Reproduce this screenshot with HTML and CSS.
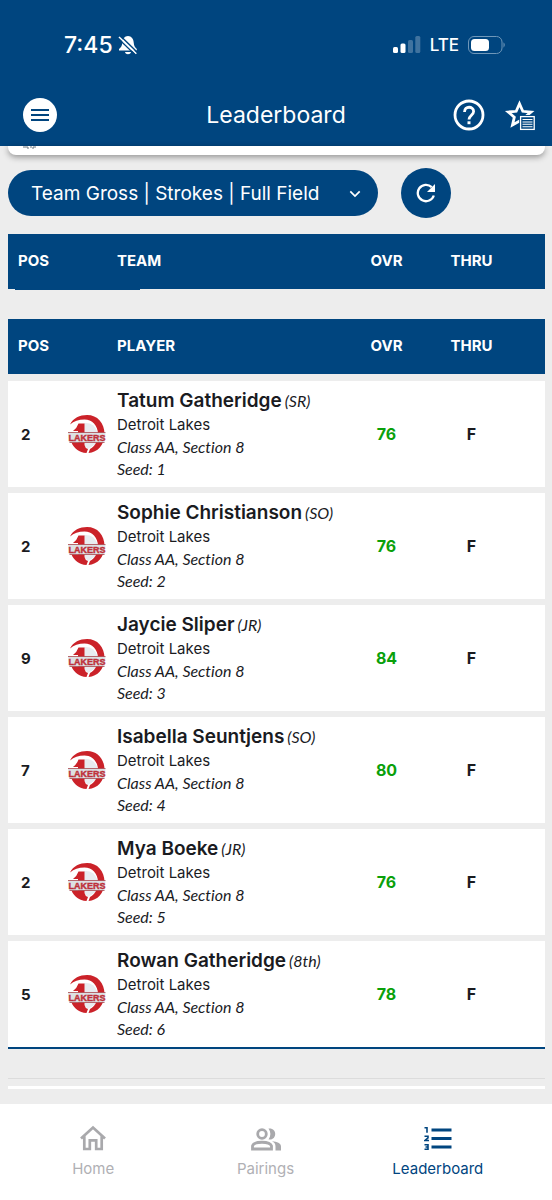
FILE: index.html
```
<!DOCTYPE html>
<html lang="en">
<head>
<meta charset="utf-8">
<meta name="viewport" content="width=device-width, initial-scale=1">
<title>Leaderboard</title>
<link rel="stylesheet" href="styles.css">
</head>
<body>
<svg class="defs" aria-hidden="true">
  <symbol id="lakers" viewBox="0 0 38 40">
    <path d="M16 9Q26 8 29.500 18V29L20 35L16 31Z" fill="#e8ecf0"/>
    <path d="M2 10.500C5 4 12 1 19 1C29.500 1 36.500 9 36.500 20C36.500 31 29.500 38.500 20.500 39L22 35C26.500 33 30 27 30 20C30 11.500 24 5.500 16.500 5.500C10.500 5.500 6 7 2 10.500Z" fill="#cb2229"/>
    <path d="M5 17Q9 14 10.500 9.500H16.500V31Q17 34 20 35L18.500 39C11 38.500 6 34.500 3.500 28.500H10V17Z" fill="#cb2229"/>
    <path d="M0 18.500H37.500L36.500 28.500H1.500Z" fill="#dde0e3"/>
    <path d="M0 18.500H37.500M1.500 28.500H36.500" stroke="#a8464d" stroke-width=".8"/>
  </symbol>
</svg>
<div class="screen">
  <header class="app-header">
    <div class="status">
      <div class="status-side">
        <span class="clock">7:45</span>
        <svg width="20" height="20" viewBox="0 0 20 20" aria-hidden="true">
          <path d="M10 1C6.500 1 4.500 4 4.300 7.500C4.100 11 3 12.300 1 14V15.500H18.800V14C17 12.300 15.900 11 15.700 7.500C15.500 4 13.500 1 10 1ZM7 17H13C12.500 20 7.500 20 7 17Z" fill="#fff"/>
          <path d="M2.800 1.300L20 18" stroke="#00457f" stroke-width="1.500"/>
          <path d="M1 2L18.300 18.800" stroke="#fff" stroke-width="1.600"/>
          <path d="M0 3.300L17.300 20" stroke="#00457f" stroke-width="1.200"/>
        </svg>
      </div>
      <div class="status-side">
        <svg width="28" height="18" viewBox="0 0 28 18" fill="#fff" aria-hidden="true">
          <rect x="0" y="11" width="5" height="6" rx="1.500"/><rect x="7.500" y="7.500" width="5" height="9.500" rx="1.500"/>
          <rect x="15" y="4" width="5" height="13" rx="1.500" opacity=".25"/><rect x="22.300" y="0" width="5" height="17" rx="1.500" opacity=".25"/>
        </svg>
        <span class="network">LTE</span>
        <svg width="38" height="18" viewBox="0 0 38 18" aria-hidden="true">
          <rect x=".5" y=".5" width="33.500" height="17" rx="5.500" fill="none" stroke="#6f97b9"/>
          <rect x="3" y="3" width="18" height="12" rx="3.500" fill="#fff"/><path d="M35.500 6.300Q38 9 35.500 11.700Z" fill="#6f97b9"/>
        </svg>
      </div>
    </div>
    <div class="toolbar">
      <button class="menu-button" aria-label="Menu">
        <svg width="18" height="12" viewBox="0 0 18 12"><path d="M0 1H18M0 6H18M0 11H18" stroke="#00457f" stroke-width="1.800"/></svg>
      </button>
      <h1 class="title">Leaderboard</h1>
      <div class="actions">
        <button class="icon-button" aria-label="Help">
          <svg width="32" height="32" viewBox="0 0 32 32" fill="none" stroke="#fff"><circle cx="16" cy="16" r="14" stroke-width="2.800"/><path d="M11.500 13C11.500 6.500 20.600 7 20.600 12.500C20.600 16 16 16.500 16 20.500" stroke-width="2.800"/><path d="M14.500 22.300H17.500V25.200H14.500Z" fill="#fff" stroke="none"/></svg>
        </button>
        <button class="icon-button" aria-label="Favorites list">
          <svg width="32" height="32" viewBox="0 0 32 32"><path d="M15.500 4.800L18.800 12.300L27 13L20.800 18.300L22.600 26L15.500 22L8.500 26L10.300 18.300L4.300 13L12.200 12.300Z" fill="none" stroke="#fff" stroke-width="2.800"/><rect x="15.200" y="16" width="16" height="15" fill="#00457f"/><rect x="16.600" y="17.600" width="13.600" height="12.800" fill="none" stroke="#fff" stroke-width="1.300"/><path d="M18.500 20.500H28.500M18.500 23H28.500M18.500 25.300H28.500M18.500 27.800H28.500" stroke="#fff" stroke-width="1.100"/></svg>
        </button>
      </div>
    </div>
  </header>

  <main class="content">
    <div class="event-card"><svg width="16" height="4" viewBox="0 0 16 4" aria-hidden="true"><path d="M1 1H6M8 1H10M11 1H14M5 2H7M10 2H12" stroke="#69757f" stroke-width="1"/></svg></div>
    <div class="filters">
      <div class="select-wrap">
        <select class="select" aria-label="Leaderboard view"><option>Team Gross | Strokes | Full Field</option></select>
        <svg class="chevron" width="12" height="8" viewBox="0 0 12 8" aria-hidden="true"><path d="M1.300 1.300L6 6L10.700 1.300" fill="none" stroke="#fff" stroke-width="1.700"/></svg>
      </div>
      <button class="refresh" aria-label="Refresh">
        <svg width="20" height="20" viewBox="0 0 20 20"><path d="M17.800 12.500A8.200 8.200 0 1 1 15.700 4.100" fill="none" stroke="#fff" stroke-width="2.300"/><path d="M19 1V9H11Z" fill="#fff"/></svg>
      </button>
    </div>

    <table class="board">
      <thead><tr><th class="pos" colspan="2">POS</th><th class="who">TEAM</th><th class="score">OVR</th><th class="thru">THRU</th></tr></thead>
    </table>
    <div class="marker"></div>

    <table class="board players">
      <thead><tr><th class="pos">POS</th><th class="logo"></th><th class="who">PLAYER</th><th class="score">OVR</th><th class="thru">THRU</th></tr></thead>
      <tbody>
        <tr><td class="pos">2</td><td class="logo"><svg class="crest" viewBox="0 0 38 40" role="img" aria-label="Lakers"><use href="#lakers"/><text x="19" y="27" class="crest-text">LAKERS</text></svg></td><td class="who"><div class="name">Tatum Gatheridge<em>(SR)</em></div><div>Detroit Lakes</div><em>Class AA, Section 8</em><em>Seed: 1</em></td><td class="score">76</td><td class="thru">F</td></tr>
        <tr><td class="pos">2</td><td class="logo"><svg class="crest" viewBox="0 0 38 40" role="img" aria-label="Lakers"><use href="#lakers"/><text x="19" y="27" class="crest-text">LAKERS</text></svg></td><td class="who"><div class="name">Sophie Christianson<em>(SO)</em></div><div>Detroit Lakes</div><em>Class AA, Section 8</em><em>Seed: 2</em></td><td class="score">76</td><td class="thru">F</td></tr>
        <tr><td class="pos">9</td><td class="logo"><svg class="crest" viewBox="0 0 38 40" role="img" aria-label="Lakers"><use href="#lakers"/><text x="19" y="27" class="crest-text">LAKERS</text></svg></td><td class="who"><div class="name">Jaycie Sliper<em>(JR)</em></div><div>Detroit Lakes</div><em>Class AA, Section 8</em><em>Seed: 3</em></td><td class="score">84</td><td class="thru">F</td></tr>
        <tr><td class="pos">7</td><td class="logo"><svg class="crest" viewBox="0 0 38 40" role="img" aria-label="Lakers"><use href="#lakers"/><text x="19" y="27" class="crest-text">LAKERS</text></svg></td><td class="who"><div class="name">Isabella Seuntjens<em>(SO)</em></div><div>Detroit Lakes</div><em>Class AA, Section 8</em><em>Seed: 4</em></td><td class="score">80</td><td class="thru">F</td></tr>
        <tr><td class="pos">2</td><td class="logo"><svg class="crest" viewBox="0 0 38 40" role="img" aria-label="Lakers"><use href="#lakers"/><text x="19" y="27" class="crest-text">LAKERS</text></svg></td><td class="who"><div class="name">Mya Boeke<em>(JR)</em></div><div>Detroit Lakes</div><em>Class AA, Section 8</em><em>Seed: 5</em></td><td class="score">76</td><td class="thru">F</td></tr>
        <tr><td class="pos">5</td><td class="logo"><svg class="crest" viewBox="0 0 38 40" role="img" aria-label="Lakers"><use href="#lakers"/><text x="19" y="27" class="crest-text">LAKERS</text></svg></td><td class="who"><div class="name">Rowan Gatheridge<em>(8th)</em></div><div>Detroit Lakes</div><em>Class AA, Section 8</em><em>Seed: 6</em></td><td class="score">78</td><td class="thru">F</td></tr>
      </tbody>
    </table>
    <div class="end-rule"></div>
    <div class="next-card"></div>
  </main>

  <nav class="tabs">
    <a class="tab" href="#home"><svg width="28" height="28" viewBox="0 0 28 28" fill="none" stroke="#a9a9ac" stroke-width="2.700"><path d="M2 14.500L14 3.500L26 14.500M5.300 12V25H10.800V16.300H17.200V25H22.700V12" /></svg><span>Home</span></a>
    <a class="tab" href="#pairings"><svg width="32" height="28" viewBox="0 0 32 28" fill="none" stroke="#a9a9ac" stroke-width="2.800"><circle cx="13" cy="10" r="4.300"/><path d="M3.500 25V22C5 17 21 17 22.500 22V25Z"/><path d="M19.500 4.500C28.500 3.500 28.500 16.500 19.500 15.500C22 12 22 8 19.500 4.500ZM23 17.300C28 17.800 32 19 32 22.500V26.400H26.500V22.500C26.500 20 25.500 18.500 23 17.300Z" fill="#a9a9ac" stroke="none"/></svg><span>Pairings</span></a>
    <a class="tab active" href="#leaderboard" aria-current="page"><svg width="28" height="28" viewBox="0 0 28 28" fill="none" stroke="#00457f"><path d="M7.500 6H27.500M7.500 14.500H27.500M7.500 23H27.500" stroke-width="2.800"/><path d="M.5 3.800H3V8.800M.5 12.200H4V13.800L1 16.500H5M.5 20.700H4V25.300H.5M1.500 23H4" stroke-width="1.600"/></svg><span>Leaderboard</span></a>
  </nav>
</div>
</body>
</html>
```
FILE: styles.css
```
* { box-sizing: border-box; }
body {
  margin: 0;
  background: #ededed;
  color: #1a1b1f;
  font-family: Inter, Roboto, sans-serif;
  font-size: 15px;
}
button { padding: 0; border: 0; background: none; display: grid; place-items: center; }
svg { display: block; flex: none; }
.defs { position: absolute; width: 0; height: 0; }
.screen { min-height: 100vh; display: flex; flex-direction: column; }

.app-header { background: #00457f; color: #fff; padding-bottom: 6px; }
.status {
  display: flex;
  justify-content: space-between;
  align-items: center;
  height: 90px;
  padding: 0 46px 0 64px;
}
.status-side { display: flex; align-items: center; gap: 9px; }
.status-side:first-child { gap: 5px; }
.clock { font-size: 23px; font-weight: 500; }
.network { font-size: 17px; font-weight: 500; }
.toolbar {
  display: grid;
  grid-template-columns: 1fr auto 1fr;
  align-items: center;
  height: 50px;
  padding: 0 16px;
}
.menu-button { width: 34px; height: 34px; margin-left: 7px; border-radius: 50%; background: #fff; }
.title { margin: 0; font-size: 23px; font-weight: 400; }
.actions { display: flex; justify-content: flex-end; gap: 19px; }

.content { flex: 1; padding: 0 7px 15px 8px; }
.event-card {
  height: 9px;
  padding-left: 14px;
  border-radius: 0 0 8px 8px;
  background: #fff;
  box-shadow: 0 2px 6px rgba(0, 0, 0, .4);
}
.filters { display: flex; align-items: center; gap: 23px; padding: 13px 0 16px; }
.select-wrap { position: relative; width: 370px; }
.select {
  width: 100%;
  height: 46px;
  padding: 0 48px 0 23px;
  border: 0;
  border-radius: 23px;
  appearance: none;
  background: #00457f;
  color: #fff;
  font: 400 19px Inter, Roboto, sans-serif;
}
.chevron { position: absolute; right: 17px; top: 20px; pointer-events: none; }
.refresh { width: 50px; height: 50px; border-radius: 50%; background: #00457f; }

.board { width: 100%; table-layout: fixed; border-collapse: separate; border-spacing: 0; }
.board th, .board td { padding: 0; text-align: left; }
.board th { height: 55px; padding-bottom: 2px; background: #00457f; color: #fff; font-size: 15px; font-weight: 700; }
.board .pos { width: 56px; padding-left: 10px; }
.board .pos[colspan] { width: 101px; }
.board .logo { width: 45px; }
.board .who { padding-left: 8px; }
.board .score { width: 85px; text-align: center; }
.board .thru { width: 116px; padding-right: 31px; text-align: center; }
.board td { height: 112px; border-top: 6px solid #ededed; background: #fff; font-weight: 700; font-size: 16px; }
.board td.pos { padding-left: 13px; font-size: 15px; }
.board td.score { color: #0aa00a; }
.board td.who { font-size: 15px; font-weight: 400; line-height: 22px; }
.board em {
  display: block;
  font-family: Lato, "Open Sans", sans-serif;
  font-size: 16px;
  font-weight: 400;
  line-height: 22px;
  font-variant-ligatures: none;
}
.board .name { display: flex; align-items: center; gap: 3px; font-size: 19px; font-weight: 600; line-height: 26px; white-space: nowrap; }
.marker { width: 125px; height: 1px; margin: 0 0 29px 7px; background: #00457f; }
.players { border-bottom: 2px solid #00457f; }
.players tbody::before { content: ""; display: block; height: 1px; }
.crest { width: 38px; height: 40px; margin-left: 4px; }
.crest-text {
  font: 700 9px "Liberation Sans", sans-serif;
  text-anchor: middle;
  fill: #c8323a;
  stroke: #b5303a;
  stroke-width: .4px;
}
.end-rule { height: 1px; margin-top: 29px; background: #dcdcdc; }
.next-card { height: 3px; margin-top: 7px; background: #fff; }

.tabs {
  display: grid;
  grid-template-columns: repeat(3, 1fr);
  height: 96px;
  padding: 20px 28px 0 7px;
  background: #fff;
}
.tab {
  display: flex;
  flex-direction: column;
  align-items: center;
  gap: 7px;
  color: #b0b0b4;
  font-size: 15px;
  line-height: 20px;
  text-decoration: none;
}
.tab.active { color: #00457f; }
```
